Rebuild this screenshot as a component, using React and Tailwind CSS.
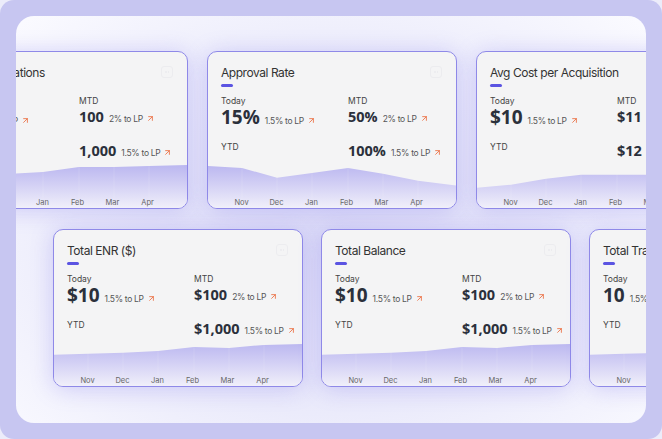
import { ArrowUpRight } from 'lucide-react';

const months = ['Nov', 'Dec', 'Jan', 'Feb', 'Mar', 'Apr'];
const xs = [0, 34, 69, 104, 140, 175, 210, 250];

const cards = [
  [
    {
      title: 'Total Applications',
      today: '10', todayLp: '1.5% to LP',
      mtd: '100', mtdLp: '2% to LP',
      ytd: '1,000', ytdLp: '1.5% to LP',
      line: [14, 14, 13, 11, 6, 6, 5, 4],
    },
    {
      title: 'Approval Rate',
      today: '15%', todayLp: '1.5% to LP',
      mtd: '50%', mtdLp: '2% to LP',
      ytd: '100%', ytdLp: '1.5% to LP',
      line: [5, 7, 17, 12, 7, 13, 20, 25],
    },
    {
      title: 'Avg Cost per Acquisition',
      today: '$10', todayLp: '1.5% to LP',
      mtd: '$11', mtdLp: '2% to LP',
      ytd: '$12', ytdLp: '1.5% to LP',
      line: [27, 24, 18, 14, 14, 14, 14, 14],
    },
  ],
  [
    {
      title: 'Total ENR ($)',
      today: '$10', todayLp: '1.5% to LP',
      mtd: '$100', mtdLp: '2% to LP',
      ytd: '$1,000', ytdLp: '1.5% to LP',
      line: [16, 15, 14, 12, 8, 9, 6, 5],
    },
    {
      title: 'Total Balance',
      today: '$10', todayLp: '1.5% to LP',
      mtd: '$100', mtdLp: '2% to LP',
      ytd: '$1,000', ytdLp: '1.5% to LP',
      line: [16, 15, 14, 12, 8, 9, 6, 5],
    },
    {
      title: 'Total Transactions',
      today: '10', todayLp: '1.5% to LP',
      mtd: '100', mtdLp: '2% to LP',
      ytd: '1,000', ytdLp: '1.5% to LP',
      line: [16, 15, 14, 12, 9, 9, 7, 6],
    },
  ],
];

const Lp = ({ text }) => (
  <span className="ml-[5px] flex items-center text-[8.5px] tracking-[-0.3px] text-[#555] font-normal font-['Inter',sans-serif]">
    {text}
    <ArrowUpRight size={9} strokeWidth={2.2} className="ml-[3px] text-[#ea6a3c]" />
  </span>
);

const Chart = ({ line, id }) => {
  const pts = line.map((y, i) => `${xs[i]},${y}`).join(' L');
  const d = `M${pts} L250,48 L0,48 Z`;
  return (
    <div className="relative mt-auto h-[48px]">
      <svg className="absolute inset-0 w-full h-full" viewBox="0 0 248 48" preserveAspectRatio="none">
        <defs>
          <linearGradient id={id} x1="0" y1="0" x2="0" y2="48" gradientUnits="userSpaceOnUse">
            <stop offset="0%" stopColor="#b6b2ef" />
            <stop offset="45%" stopColor="#d0cdf4" />
            <stop offset="100%" stopColor="#f1f0fa" />
          </linearGradient>
        </defs>
        <path d={d} fill={`url(#${id})`} />
        {[34, 69, 104, 140, 175, 210].map((x) => (
          <line key={x} x1={x} y1="0" x2={x} y2="48" stroke="#ffffff" strokeOpacity="0.22" strokeWidth="0.6" />
        ))}
      </svg>
      <div className="absolute bottom-[0px] left-[16px] flex">
        {months.map((m) => (
          <span key={m} className="w-[35px] text-center text-[7.5px] leading-[10px] text-[#666]">
            {m}
          </span>
        ))}
      </div>
    </div>
  );
};

const Card = ({ c, id }) => (
  <div className="relative w-[250px] h-[158px] shrink-0 rounded-[10px] border border-[#8f89e8] bg-[#f4f4f5] overflow-hidden flex flex-col shadow-[0_2px_22px_rgba(130,120,235,0.32)]">
    <div className="absolute top-[14px] right-[14px] w-[12px] h-[12px] rounded-[3px] border border-[#ececef] flex items-center justify-center gap-[1px]">
      <span className="w-[1.5px] h-[1.5px] rounded-full bg-[#ebebee]" />
      <span className="w-[1.5px] h-[1.5px] rounded-full bg-[#ebebee]" />
    </div>
    <div className="px-[13px] pt-[13px]">
      <div className="text-[12px] leading-[16px] tracking-[-0.45px] text-[#333] whitespace-nowrap">{c.title}</div>
      <div className="mt-[3px] w-[12px] h-[2.5px] rounded-full bg-[#5b54e2]" />
    </div>
    <div className="grid grid-cols-[127px_1fr] px-[13px] mt-[8px] whitespace-nowrap">
      <div>
        <div className="text-[8.5px] leading-[12px] text-[#444]">Today</div>
        <div className="flex items-baseline h-[20px]">
          <span className="text-[19px] leading-[20px] font-bold text-[#2b303b] font-['Open_Sans',sans-serif]">{c.today}</span>
          <Lp text={c.todayLp} />
        </div>
      </div>
      <div>
        <div className="text-[8.5px] leading-[12px] text-[#444]">MTD</div>
        <div className="flex items-baseline h-[20px]">
          <span className="text-[14.5px] leading-[20px] font-bold text-[#2b303b] font-['Open_Sans',sans-serif]">{c.mtd}</span>
          <Lp text={c.mtdLp} />
        </div>
      </div>
      <div className="mt-[14px]">
        <div className="text-[8.5px] leading-[12px] text-[#444]">YTD</div>
      </div>
      <div className="mt-[14px]">
        <div className="flex items-baseline h-[20px]">
          <span className="text-[14.5px] leading-[20px] font-bold text-[#2b303b] font-['Open_Sans',sans-serif]">{c.ytd}</span>
          <Lp text={c.ytdLp} />
        </div>
      </div>
    </div>
    <Chart line={c.line} id={id} />
  </div>
);

export default function App() {
  return (
    <div className="w-[662px] h-[439px] bg-[#ececfa] font-['Inter',sans-serif]">
      <div className="w-full h-full rounded-[14px] bg-[#c7c6f1] p-[16px]">
        <div className="w-full h-full rounded-[18px] overflow-hidden bg-[radial-gradient(ellipse_at_50%_55%,#dcdbf7_0%,#ebebfb_55%,#fbfbff_100%)] pt-[35px] flex flex-col gap-[20px]">
          <div className="flex gap-[19px] ml-[-78px]">
            {cards[0].map((c, i) => (
              <Card key={c.title} c={c} id={`g0${i}`} />
            ))}
          </div>
          <div className="flex gap-[18px] ml-[37px]">
            {cards[1].map((c, i) => (
              <Card key={c.title} c={c} id={`g1${i}`} />
            ))}
          </div>
        </div>
      </div>
    </div>
  );
}
